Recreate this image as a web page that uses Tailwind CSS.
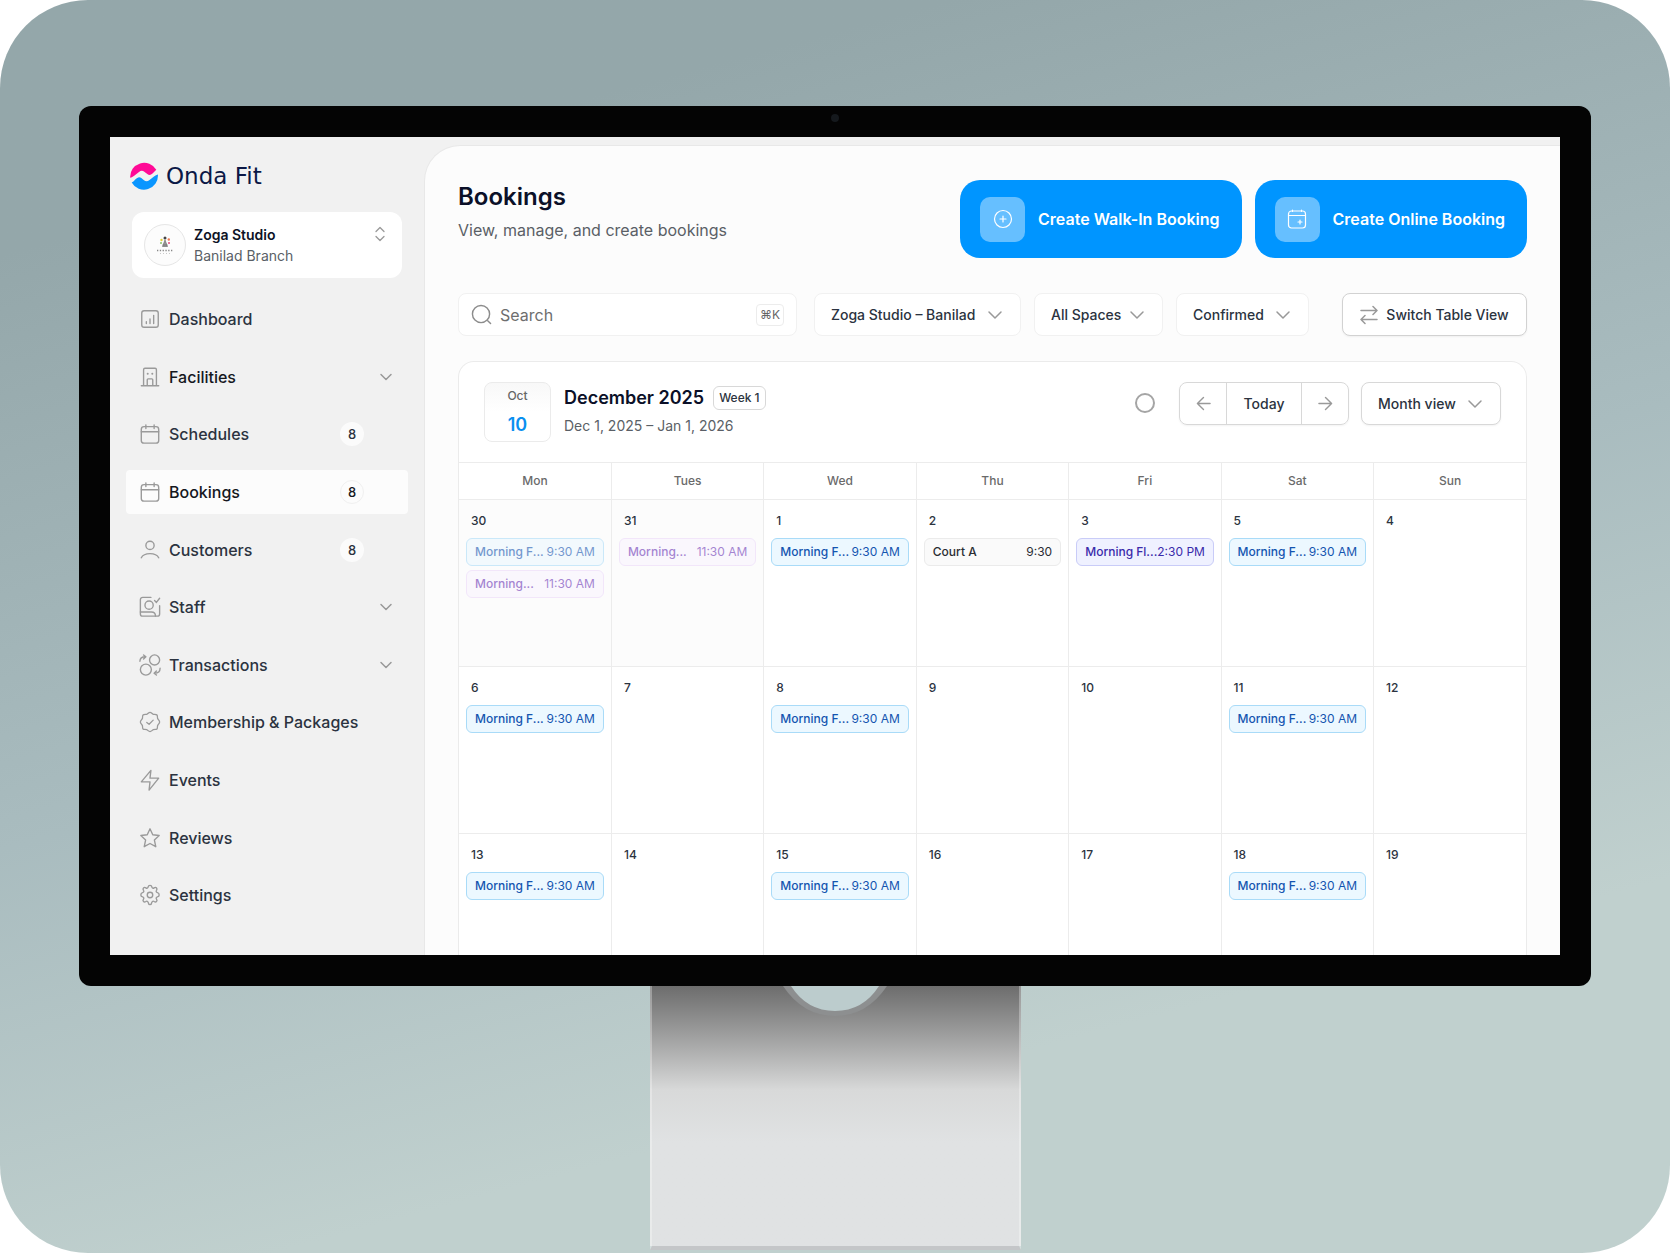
<!DOCTYPE html>
<html lang="en">
<head>
    <meta charset="UTF-8">
    <meta name="viewport" content="width=device-width, initial-scale=1.0">
    <title>Onda Fit - Bookings</title>
    <script src="https://cdn.jsdelivr.net/npm/@tailwindcss/browser@4"></script>
</head>
<body class="bg-white font-['Inter',sans-serif] text-[#2b3340]">

    <div class="min-h-screen flex flex-col items-center rounded-[88px] bg-linear-165 from-[#94a7aa] from-15% via-[#a9bcbf] via-50% to-[#c0d0ce] to-78% px-[79px] pt-[106px]">

        <!-- Monitor -->
        <div class="relative w-full rounded-xl bg-[#040404] p-[31px]">
            <span class="absolute left-1/2 top-2 size-2 -translate-x-1/2 rounded-full bg-[#15191d]"></span>

            <div class="flex bg-[#f1f1f1] pt-2">

                <!-- Sidebar -->
                <aside class="flex w-[314px] shrink-0 flex-col px-4 pt-[17px] pb-[37px]">
                    <a href="#" class="ml-1 flex items-center gap-2">
                        <svg class="size-7" viewBox="0 0 28 28">
                            <path fill="#ff0a96" d="M.2 15.800A14 14 0 0 1 26.300 7.800L22.500 11.500C20.800 13.200 19 13.400 17.300 12L14.300 9.700C12.500 8.400 10.800 8.500 9 9.900L4.500 13.500C3 14.700 1.500 15.500.2 15.800Z" />
                            <path fill="#0a96ff" d="M27.900 12.500A14 14 0 0 1 1.700 20.500C3 20 3.800 19 5 17.700C7.500 15 9.500 14.500 11.300 16L14 18.300C15.800 19.800 17.500 19.700 19.500 18L24 14.500C25.300 13.400 26.500 12.800 27.900 12.500Z" />
                        </svg>
                        <span class="font-['DejaVu_Sans',sans-serif] text-[23px] leading-7 text-[#0b1846]">Onda Fit</span>
                    </a>

                    <button type="button" class="mx-[6px] mt-[22px] flex h-[66px] items-center rounded-xl bg-white px-3 text-left">
                        <span class="flex size-[42px] items-center justify-center rounded-full border border-[#e6e6e6] bg-[#fcfcfc]">
                            <svg class="size-5" viewBox="0 0 20 20">
                                <circle cx="10" cy="3" r="1.500" fill="#444" />
                                <circle cx="6.500" cy="5" r="1.200" fill="#e3cf3a" />
                                <circle cx="13.800" cy="4.500" r="1.200" fill="#ee7a55" />
                                <circle cx="6" cy="8" r="1" fill="#8cc36a" />
                                <circle cx="14" cy="8" r="1" fill="#e64b80" />
                                <path d="M10 5l2.500 6.500h-5zM7.500 10h5" fill="#999" stroke="#666" stroke-width=".6" />
                                <path d="M2 15.500h16" stroke="#888" stroke-width="1.300" stroke-dasharray="1.300 1.500" />
                                <path d="M5 18.500h10" stroke="#bbb" stroke-width=".8" stroke-dasharray="1 2" />
                            </svg>
                        </span>
                        <span class="ml-2 flex-1">
                            <span class="block text-sm leading-[21px] font-semibold text-[#0d1326]">Zoga Studio</span>
                            <span class="block text-sm leading-[21px] text-[#5a5f66]">Banilad Branch</span>
                        </span>
                        <svg class="mr-1 mb-[22px] h-4 w-3" viewBox="0 0 12 16" fill="none" stroke="#999" stroke-width="1.300" stroke-linecap="round" stroke-linejoin="round">
                            <path d="M2 5.500l4-4 4 4M2 10.500l4 4 4-4" />
                        </svg>
                    </button>

                    <nav class="mt-[19px] flex flex-1 flex-col justify-between text-base leading-6 font-medium">
                        <a href="#" class="flex h-11 items-center gap-2 rounded pr-[14px] pl-[13px]">
                            <svg class="size-[22px]" viewBox="0 0 24 24" fill="none" stroke="#9a9a9a" stroke-width="1.500" stroke-linecap="round" stroke-linejoin="round"><rect x="3" y="3" width="18" height="18" rx="2.500" /><path d="M8 17v-2M12 17v-5M16 17V8" /></svg>
                            Dashboard
                        </a>
                        <a href="#" class="flex h-11 items-center gap-2 rounded pr-[14px] pl-[13px] text-[#15181e]">
                            <svg class="size-[22px]" viewBox="0 0 24 24" fill="none" stroke="#9a9a9a" stroke-width="1.500" stroke-linecap="round" stroke-linejoin="round"><path d="M2.500 21.500h19M5 21.500V4a1.500 1.500 0 0 1 1.500-1.500h11A1.500 1.500 0 0 1 19 4v17.500M9 21.500V15a1 1 0 0 1 1-1h4a1 1 0 0 1 1 1v6.500" /><path stroke-width="2.200" d="M9.500 8.500v.01M14.500 8.500v.01" /></svg>
                            Facilities
                            <svg class="ml-auto size-4" viewBox="0 0 16 16" fill="none" stroke="#999" stroke-width="1.500" stroke-linecap="round" stroke-linejoin="round"><path d="M3 5.500l5 5 5-5" /></svg>
                        </a>
                        <a href="#" class="flex h-11 items-center gap-2 rounded pr-[14px] pl-[13px]">
                            <svg class="size-[22px]" viewBox="0 0 24 24" fill="none" stroke="#9a9a9a" stroke-width="1.500" stroke-linecap="round" stroke-linejoin="round"><rect x="2.500" y="4" width="19" height="18" rx="3" /><path d="M2.500 9.500h19M7.500 2v4M16.500 2v4" /></svg>
                            Schedules
                            <span class="mr-[30px] ml-auto flex size-6 items-center justify-center rounded-full bg-[#fbfbfb] text-[13px]">8</span>
                        </a>
                        <a href="#" aria-current="page" class="flex h-11 items-center gap-2 rounded bg-[#fcfcfc] pr-[14px] pl-[13px] text-[#15181e]">
                            <svg class="size-[22px]" viewBox="0 0 24 24" fill="none" stroke="#9a9a9a" stroke-width="1.500" stroke-linecap="round" stroke-linejoin="round"><rect x="2.500" y="4" width="19" height="18" rx="3" /><path d="M2.500 9.500h19M7.500 2v4M16.500 2v4" /></svg>
                            Bookings
                            <span class="mr-[30px] ml-auto flex size-6 items-center justify-center rounded-full border border-[#f0f0f0] text-[13px]">8</span>
                        </a>
                        <a href="#" class="flex h-11 items-center gap-2 rounded pr-[14px] pl-[13px]">
                            <svg class="size-[22px]" viewBox="0 0 24 24" fill="none" stroke="#9a9a9a" stroke-width="1.500" stroke-linecap="round" stroke-linejoin="round"><circle cx="12" cy="7" r="4.500" /><path d="M2.500 20.500c1.500-3 5-4.500 9.500-4.500s8 1.500 9.500 4.500" /></svg>
                            Customers
                            <span class="mr-[30px] ml-auto flex size-6 items-center justify-center rounded-full bg-[#fbfbfb] text-[13px]">8</span>
                        </a>
                        <a href="#" class="flex h-11 items-center gap-2 rounded pr-[14px] pl-[13px]">
                            <svg class="size-[22px]" viewBox="0 0 24 24" fill="none" stroke="#9a9a9a" stroke-width="1.500" stroke-linecap="round" stroke-linejoin="round"><path d="M13 1.500H4A2.500 2.500 0 0 0 1.500 4v15.500A2.500 2.500 0 0 0 4 22h16a2.500 2.500 0 0 0 2.500-2.500v-9M17 5l2 2 3.500-4.500" /><circle cx="11" cy="10" r="4.500" /><path d="M1.500 17.500h12c3 0 4.500 1.500 4.500 4.500" /></svg>
                            Staff
                            <svg class="ml-auto size-4" viewBox="0 0 16 16" fill="none" stroke="#999" stroke-width="1.500" stroke-linecap="round" stroke-linejoin="round"><path d="M3 5.500l5 5 5-5" /></svg>
                        </a>
                        <a href="#" class="flex h-11 items-center gap-2 rounded pr-[14px] pl-[13px]">
                            <svg class="size-[22px]" viewBox="0 0 24 24" fill="none" stroke="#9a9a9a" stroke-width="1.500" stroke-linecap="round" stroke-linejoin="round"><circle cx="17" cy="6.500" r="5.500" /><circle cx="7.500" cy="17" r="6" /><path d="M1 8c0-3.500 2-5 6-5M5 1l2.500 2L5 5.500M23 15.500c0 3.500-2 5.500-6 5.500M19 18.500L16.500 21l2.500 2" /></svg>
                            Transactions
                            <svg class="ml-auto size-4" viewBox="0 0 16 16" fill="none" stroke="#999" stroke-width="1.500" stroke-linecap="round" stroke-linejoin="round"><path d="M3 5.500l5 5 5-5" /></svg>
                        </a>
                        <a href="#" class="flex h-11 items-center gap-2 rounded pr-[14px] pl-[13px]">
                            <svg class="size-[22px]" viewBox="0 0 24 24" fill="none" stroke="#9a9a9a" stroke-width="1.400" stroke-linecap="round" stroke-linejoin="round"><path d="M12 1.500c1.500 0 2.200 1.800 3.600 2.100S18.800 3.500 19.600 4.400s.2 2.600.8 3.900S22.500 10.500 22.500 12s-1.500 2.400-2.100 3.700.1 3-.8 3.900-2.600.2-4 .8S13.500 22.500 12 22.500s-2.200-1.500-3.600-2.100-3.100.1-4-.8-.2-2.600-.8-3.900S1.500 13.500 1.500 12s1.500-2.400 2.100-3.700-.1-3 .8-3.900 2.600-.5 4-.8S10.500 1.500 12 1.500z" /><path d="M8.500 12.500l2.500 2 4.500-4.500" /></svg>
                            Membership &amp; Packages
                        </a>
                        <a href="#" class="flex h-11 items-center gap-2 rounded pr-[14px] pl-[13px]">
                            <svg class="size-[22px]" viewBox="0 0 24 24" fill="none" stroke="#9a9a9a" stroke-width="1.500" stroke-linecap="round" stroke-linejoin="round"><path d="M13 1.500L2.500 14H12l-1 9L21.500 10H12z" /></svg>
                            Events
                        </a>
                        <a href="#" class="flex h-11 items-center gap-2 rounded pr-[14px] pl-[13px]">
                            <svg class="size-[22px]" viewBox="0 0 24 24" fill="none" stroke="#9a9a9a" stroke-width="1.500" stroke-linecap="round" stroke-linejoin="round"><path d="M12 2l3 6.500 7 .8-5.200 4.900 1.500 7.300L12 18l-6.300 3.500 1.500-7.300L2 9.300l7-.8z" /></svg>
                            Reviews
                        </a>
                        <a href="#" class="flex h-11 items-center gap-2 rounded pr-[14px] pl-[13px]">
                            <svg class="size-[22px]" viewBox="0 0 24 24" fill="none" stroke="#9a9a9a" stroke-width="1.500" stroke-linecap="round" stroke-linejoin="round"><circle cx="12" cy="12" r="3" /><path d="M10 3.200C10.200 2 10.900 1.500 12 1.500s1.800.5 2 1.700c.2 1.300 1.500 1.800 2.500 1 1-.7 1.900-.7 2.600.1s.7 1.600 0 2.600c-.8 1-.2 2.300 1 2.500 1.200.3 1.900 1 1.900 2.600s-.7 1.800-1.900 2c-1.200.2-1.800 1.500-1 2.500.7 1 .7 1.900 0 2.600s-1.600.7-2.600 0c-1-.8-2.300-.2-2.500 1-.2 1.500-.9 2.400-2 2.400s-1.800-.9-2-2.400c-.2-1.200-1.500-1.800-2.500-1-1 .7-1.900.7-2.600 0s-.7-1.600 0-2.600c.8-1 .2-2.300-1-2.500-1.200-.2-1.900-.9-1.900-2s.7-2.300 1.900-2.600c1.200-.2 1.800-1.500 1-2.500-.7-1-.7-1.900 0-2.600s1.600-.8 2.600-.1c1 .8 2.300.3 2.500-1z" /></svg>
                            Settings
                        </a>
                    </nav>
                </aside>

                <!-- Content -->
                <main class="min-w-0 flex-1 rounded-tl-[36px] border-t border-l border-[#e8e8e8] bg-[#fcfcfc] pt-[34px] pr-[33px] pl-[33px]">
                    <header class="flex items-start justify-between">
                        <div>
                            <h1 class="text-2xl leading-[34px] font-semibold text-[#0b1028]">Bookings</h1>
                            <p class="mt-[2px] text-base leading-7 text-[#5a5f66]">View, manage, and create bookings</p>
                        </div>
                        <div class="flex gap-[13px]">
                            <button type="button" class="flex h-[78px] items-center gap-[13px] rounded-[20px] bg-[#0095ff] pr-[22px] pl-5 text-base font-semibold text-white">
                                <span class="flex size-[45px] items-center justify-center rounded-[10px] bg-white/40">
                                    <svg class="size-5" viewBox="0 0 20 20" fill="none" stroke="currentColor" stroke-width="1.200" stroke-linecap="round"><circle cx="10" cy="10" r="8.500" /><path d="M10 7v6M7 10h6" /></svg>
                                </span>
                                Create Walk-In Booking
                            </button>
                            <button type="button" class="flex h-[78px] items-center gap-[13px] rounded-[20px] bg-[#0095ff] pr-[22px] pl-5 text-base font-semibold text-white">
                                <span class="flex size-[45px] items-center justify-center rounded-[10px] bg-white/40">
                                    <svg class="size-5" viewBox="0 0 20 20" fill="none" stroke="currentColor" stroke-width="1.200" stroke-linecap="round"><rect x="1.500" y="2" width="17" height="17" rx="3" /><path d="M1.500 6.500h17M5.500 1v1.500M14.500 1v1.500M13 11v4M11 13h4" /></svg>
                                </span>
                                Create Online Booking
                            </button>
                        </div>
                    </header>

                    <div class="mt-[35px] flex gap-[13px] text-sm font-medium">
                        <label class="mr-1 flex h-[43px] min-w-0 flex-1 items-center gap-2 rounded-lg border border-[#f1f1f1] bg-white px-3">
                            <svg class="size-[21px] shrink-0" viewBox="0 0 22 22" fill="none" stroke="#8c8c8c" stroke-width="1.500" stroke-linecap="round"><circle cx="10.500" cy="10.500" r="9" /><path d="M17.500 17.500l3 3" /></svg>
                            <input type="search" placeholder="Search" aria-label="Search" class="min-w-0 flex-1 bg-transparent text-base leading-6 font-normal outline-none placeholder:text-[#6e6e6e]">
                            <kbd class="flex h-[22px] w-7 items-center justify-center rounded border border-[#ececec] font-['Inter','DejaVu_Sans',sans-serif] text-xs font-normal text-[#666]">⌘K</kbd>
                        </label>
                        <div class="relative w-[207px]">
                            <select aria-label="Branch" class="h-[43px] w-full appearance-none rounded-lg border border-[#f1f1f1] bg-white pl-4">
                                <option>Zoga Studio – Banilad</option>
                            </select>
                            <svg class="pointer-events-none absolute top-[14px] right-[18px] size-4" viewBox="0 0 16 16" fill="none" stroke="#999" stroke-width="1.500" stroke-linecap="round" stroke-linejoin="round"><path d="M2 5l6 6 6-6" /></svg>
                        </div>
                        <div class="relative w-[129px]">
                            <select aria-label="Space" class="h-[43px] w-full appearance-none rounded-lg border border-[#f1f1f1] bg-white pl-4">
                                <option>All Spaces</option>
                            </select>
                            <svg class="pointer-events-none absolute top-[14px] right-[18px] size-4" viewBox="0 0 16 16" fill="none" stroke="#999" stroke-width="1.500" stroke-linecap="round" stroke-linejoin="round"><path d="M2 5l6 6 6-6" /></svg>
                        </div>
                        <div class="relative w-[133px]">
                            <select aria-label="Status" class="h-[43px] w-full appearance-none rounded-lg border border-[#f1f1f1] bg-white pl-4">
                                <option>Confirmed</option>
                            </select>
                            <svg class="pointer-events-none absolute top-[14px] right-[18px] size-4" viewBox="0 0 16 16" fill="none" stroke="#999" stroke-width="1.500" stroke-linecap="round" stroke-linejoin="round"><path d="M2 5l6 6 6-6" /></svg>
                        </div>
                        <button type="button" class="ml-5 flex h-[43px] w-[185px] items-center justify-center gap-2 rounded-lg border border-[#d2d2d2] bg-white shadow-xs">
                            <svg class="h-5 w-[18px]" viewBox="0 0 18 20" fill="none" stroke="#999" stroke-width="1.500" stroke-linecap="round" stroke-linejoin="round"><path d="M1 5.500h16M13 1.500l4 4-4 4M17 14.500H1M5 10.500l-4 4 4 4" /></svg>
                            Switch Table View
                        </button>
                    </div>

                    <!-- Calendar -->
                    <section class="mt-[25px] overflow-hidden rounded-t-2xl border border-b-0 border-[#ebebeb] bg-white">
                        <div class="flex items-start px-[25px] pt-5 pb-5">
                            <div class="flex h-[60px] w-[67px] flex-col items-center rounded-lg border border-[#ebebeb] bg-linear-to-b from-[#f8f8f8] to-white to-50%">
                                <span class="mt-1 text-xs leading-[18px] font-medium text-[#666]">Oct</span>
                                <span class="mt-1 text-lg leading-8 font-semibold text-[#0a8ff0]">10</span>
                            </div>
                            <div class="ml-[13px] py-[2px]">
                                <div class="flex items-center gap-[9px]">
                                    <h2 class="text-lg leading-7 font-semibold text-[#0b1028]">December 2025</h2>
                                    <span class="rounded-md border border-[#d8d8d8] px-[5px] text-xs leading-[22px] font-medium">Week 1</span>
                                </div>
                                <p class="text-sm leading-7 text-[#5a5f66]">Dec 1, 2025 – Jan 1, 2026</p>
                            </div>
                            <button type="button" aria-label="Refresh" class="mt-[11px] mr-6 ml-auto size-5 rounded-full border-2 border-[#a5a5a5]"></button>
                            <div class="flex h-[43px] items-stretch rounded-lg border border-[#d8d8d8] text-sm font-medium shadow-xs">
                                <button type="button" aria-label="Previous" class="flex w-[46px] items-center justify-center">
                                    <svg class="size-[15px]" viewBox="0 0 16 16" fill="none" stroke="#999" stroke-width="1.500" stroke-linecap="round" stroke-linejoin="round"><path d="M15 8H1.500M8 1.500L1.500 8 8 14.500" /></svg>
                                </button>
                                <button type="button" class="w-[76px] border-x border-[#d8d8d8]">Today</button>
                                <button type="button" aria-label="Next" class="flex w-[46px] items-center justify-center">
                                    <svg class="size-[15px]" viewBox="0 0 16 16" fill="none" stroke="#999" stroke-width="1.500" stroke-linecap="round" stroke-linejoin="round"><path d="M1 8h13.500M8 1.500L14.500 8 8 14.500" /></svg>
                                </button>
                            </div>
                            <div class="relative ml-3 w-[140px]">
                                <select aria-label="Calendar view" class="h-[43px] w-full appearance-none rounded-lg border border-[#d8d8d8] bg-white pl-4 text-sm font-medium shadow-xs">
                                    <option>Month view</option>
                                </select>
                                <svg class="pointer-events-none absolute top-[14px] right-[18px] size-4" viewBox="0 0 16 16" fill="none" stroke="#999" stroke-width="1.500" stroke-linecap="round" stroke-linejoin="round"><path d="M2 5l6 6 6-6" /></svg>
                            </div>
                        </div>

                        <table class="w-full table-fixed text-xs">
                            <thead>
                                <tr class="h-[37px] border-y border-[#ececec] text-[#6a6a6a]">
                                    <th scope="col" class="border-r border-[#ececec] font-medium">Mon</th>
                                    <th scope="col" class="border-r border-[#ececec] font-medium">Tues</th>
                                    <th scope="col" class="border-r border-[#ececec] font-medium">Wed</th>
                                    <th scope="col" class="border-r border-[#ececec] font-medium">Thu</th>
                                    <th scope="col" class="border-r border-[#ececec] font-medium">Fri</th>
                                    <th scope="col" class="border-r border-[#ececec] font-medium">Sat</th>
                                    <th scope="col" class="font-medium">Sun</th>
                                </tr>
                            </thead>
                            <tbody id="calendar-body"></tbody>
                        </table>
                    </section>
                </main>
            </div>
        </div>

        <!-- Stand -->
        <div class="mb-[3px] flex w-[371px] flex-1 justify-center overflow-hidden border-x-2 border-b-4 border-x-white/30 border-b-[#c4c6c8] bg-linear-to-b from-[#6d6d6d] via-[#d8d9d9] via-40% to-[#e0e2e3] to-60%">
            <svg class="h-[30px] w-[104px]" viewBox="0 0 104 30">
                <path d="M0 0Q20 30 52 30T104 0z" fill="#8d8f90" />
                <path d="M8 0Q24 25 52 25T96 0z" fill="#bccccd" />
            </svg>
        </div>
    </div>

    <script>
        const weeks = [
            [
                { day: 30, past: true, events: [['blue', 'Morning F...', '9:30 AM'], ['purple', 'Morning...', '11:30 AM']] },
                { day: 31, past: true, events: [['purple', 'Morning...', '11:30 AM']] },
                { day: 1, events: [['blue', 'Morning F...', '9:30 AM']] },
                { day: 2, events: [['gray', 'Court A', '9:30']] },
                { day: 3, events: [['indigo', 'Morning Fl...', '2:30 PM']] },
                { day: 5, events: [['blue', 'Morning F...', '9:30 AM']] },
                { day: 4 },
            ],
            [
                { day: 6, events: [['blue', 'Morning F...', '9:30 AM']] },
                { day: 7 },
                { day: 8, events: [['blue', 'Morning F...', '9:30 AM']] },
                { day: 9 },
                { day: 10 },
                { day: 11, events: [['blue', 'Morning F...', '9:30 AM']] },
                { day: 12 },
            ],
            [
                { day: 13, events: [['blue', 'Morning F...', '9:30 AM']] },
                { day: 14 },
                { day: 15, events: [['blue', 'Morning F...', '9:30 AM']] },
                { day: 16 },
                { day: 17 },
                { day: 18, events: [['blue', 'Morning F...', '9:30 AM']] },
                { day: 19 },
            ],
        ];

        const colors = {
            blue: 'border-[#a9dbf8] bg-[#ecf8ff] text-[#1455b0]',
            purple: 'border-[#ecd9fa] bg-[#faf4ff] text-[#6a35b5]',
            gray: 'border-[#ebebeb] bg-[#fafafa] text-[#2a2d33]',
            indigo: 'border-[#c9ccf8] bg-[#eff1ff] text-[#3a2bab]',
        };

        const rowHeights = ['h-[167px]', 'h-[167px]', 'h-[121px]'];

        function renderEvent([color, name, time], past) {
            return `<li class="flex h-7 items-center justify-between rounded-md border px-2 whitespace-nowrap ${colors[color]} ${past ? 'opacity-60' : ''}">
                <span class="font-medium">${name}</span><span>${time}</span>
            </li>`;
        }

        function renderDay({ day, past, events = [] }) {
            return `<td class="border-r border-[#ececec] px-[7px] pt-[11px] align-top last:border-r-0 ${past ? 'bg-[#fcfcfc]' : ''}">
                <div class="px-[5px] leading-5 font-medium">${day}</div>
                <ul class="mt-[7px] flex flex-col gap-1">${events.map(e => renderEvent(e, past)).join('')}</ul>
            </td>`;
        }

        document.getElementById('calendar-body').innerHTML = weeks.map((week, i) =>
            `<tr class="border-b border-[#ececec] last:border-b-0 ${rowHeights[i]}">${week.map(renderDay).join('')}</tr>`
        ).join('');
    </script>
</body>
</html>
